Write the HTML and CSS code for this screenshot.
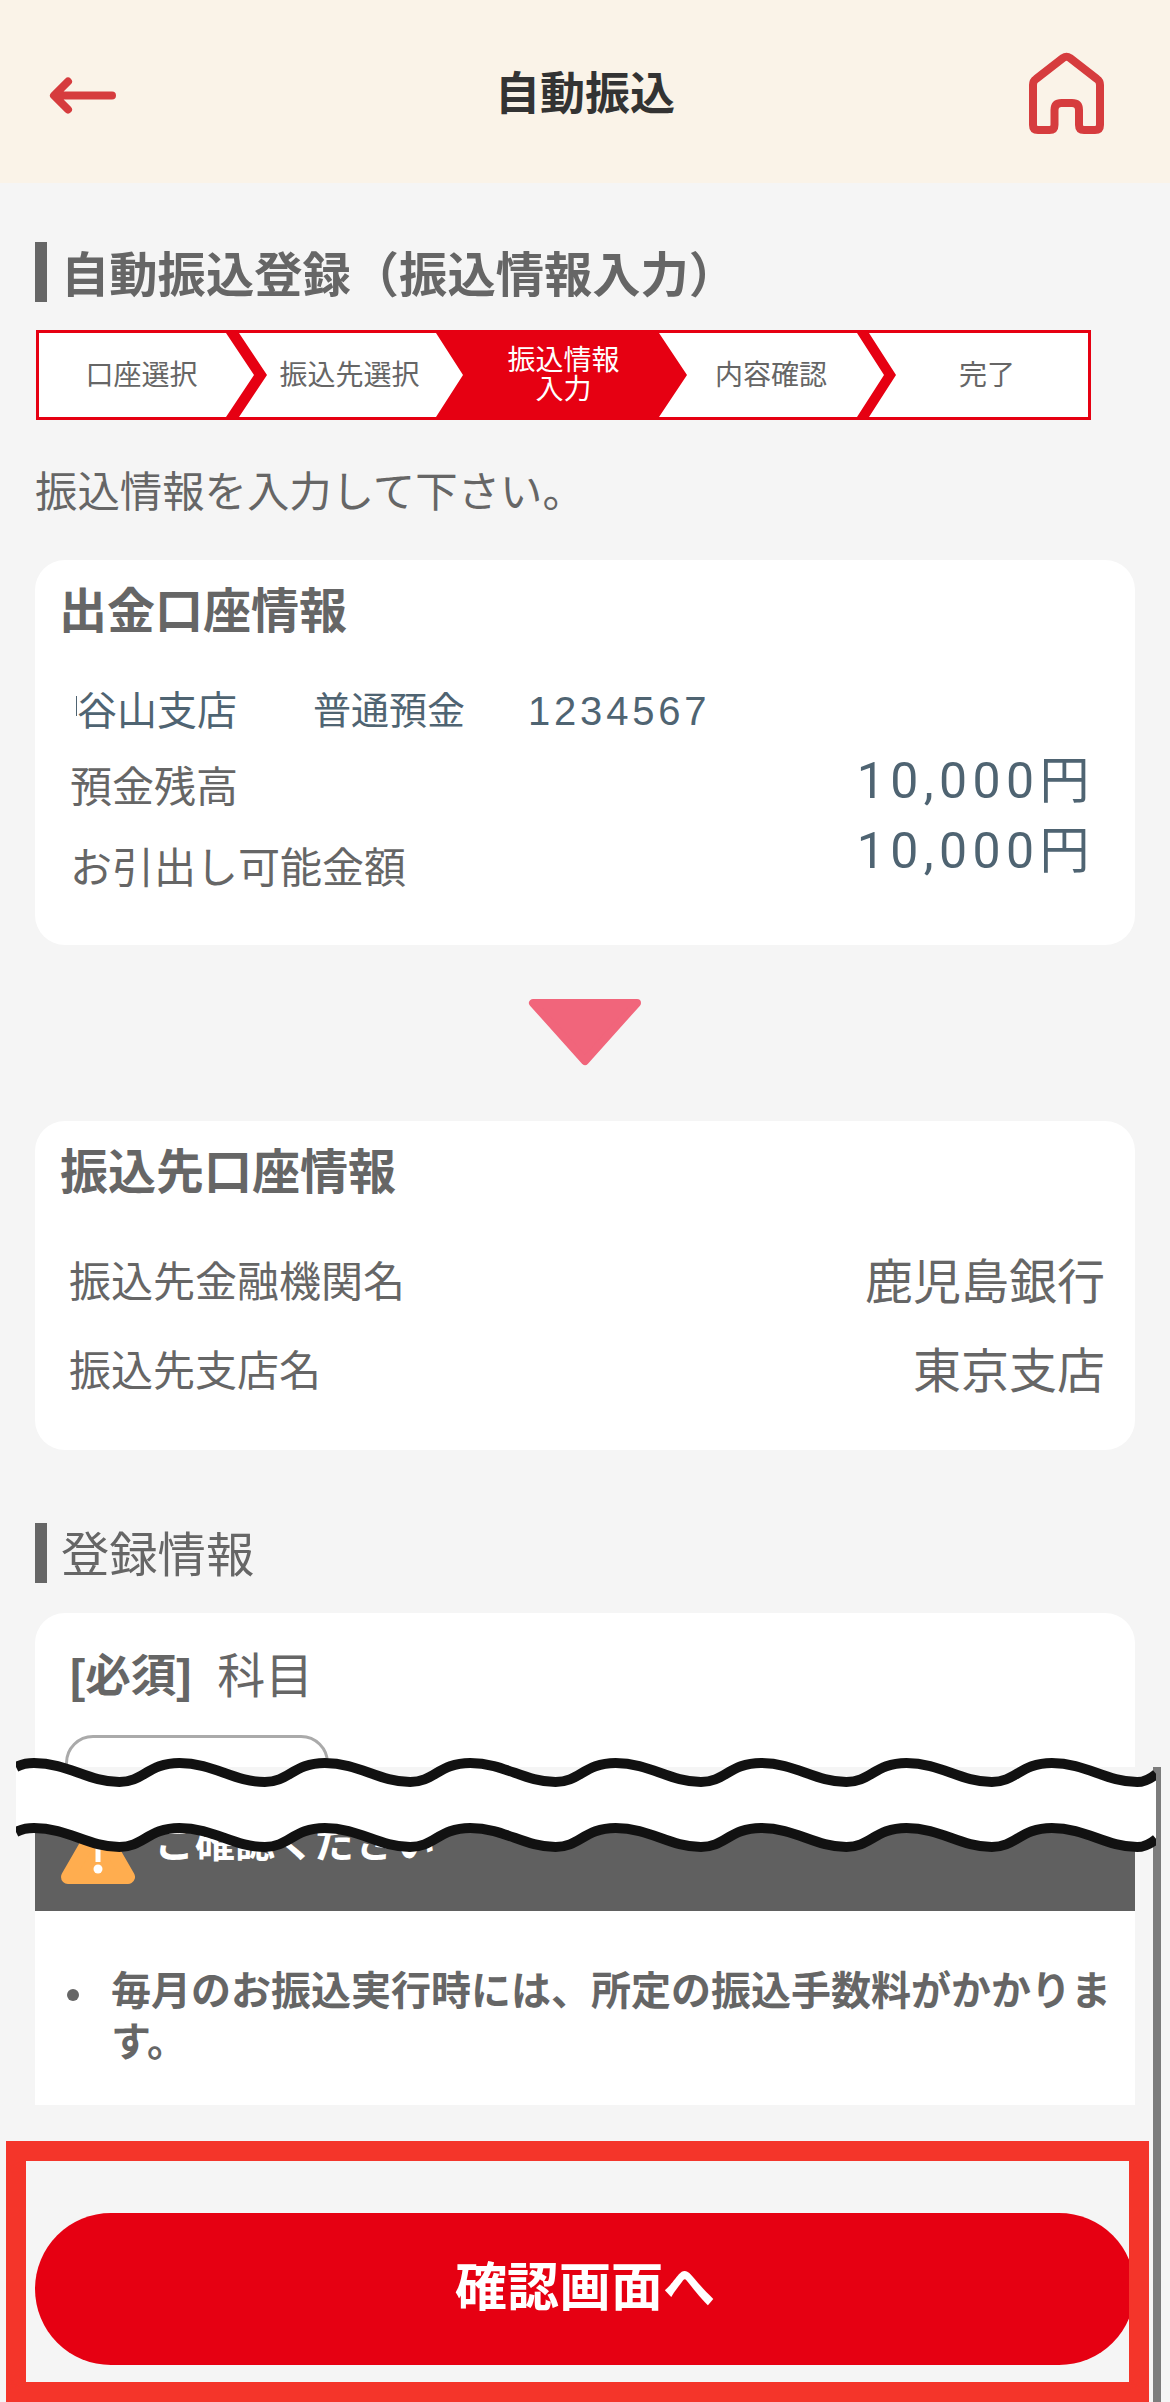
FILE: index.html
```html
<!DOCTYPE html>
<html lang="ja">
<head>
    <meta charset="UTF-8">
    <meta name="viewport" content="width=device-width, initial-scale=1.0">
    <title>自動振込</title>
    <link rel="stylesheet" href="styles.css">
</head>
<body>
    <div class="upper">
        <header class="topbar">
            <svg class="back-icon" viewBox="0 0 70 40" aria-hidden="true">
                <path d="M66 20.5H10M22 6.5L8 20.5l14 14" fill="none" stroke="#d63c3e" stroke-width="8" stroke-linecap="round" stroke-linejoin="round"/>
            </svg>
            <h1>自動振込</h1>
            <svg class="home-icon" viewBox="0 0 80 86" aria-hidden="true">
                <path d="M27.5 75V60q0-7 7-7h10.5q7 0 7 7V75q0 5 5 5H68q5 0 5-5V35q0-4-3-6L43 8q-3.5-2.5-7 0L9 29q-3 2-3 6V75q0 5 5 5H22.5q5 0 5-5z" fill="none" stroke="#d63c3e" stroke-width="8" stroke-linejoin="round"/>
            </svg>
        </header>

        <main class="content">
            <h2 class="section-title">自動振込登録（振込情報入力）</h2>

            <div class="steps">
                <svg class="steps-bg" viewBox="0 0 1049 84" aria-hidden="true">
                    <polygon points="187,0 200,0 228,42 200,84 187,84 215,42" fill="#e60012"/>
                    <polygon points="397,0 620,0 648,42 620,84 397,84 424,42" fill="#e60012"/>
                    <polygon points="818,0 830,0 857,42 830,84 818,84 845,42" fill="#e60012"/>
                </svg>
                <div class="step step-1">口座選択</div>
                <div class="step step-2">振込先選択</div>
                <div class="step step-3 active">振込情報<br>入力</div>
                <div class="step step-4">内容確認</div>
                <div class="step step-5">完了</div>
            </div>

            <p class="intro">振込情報を入力して下さい。</p>

            <section class="card from-card">
                <h3 class="card-title">出金口座情報</h3>
                <div class="account-line">
                    <span class="branch">谷山支店</span>
                    <span class="kind">普通預金</span>
                    <span class="number">1234567</span>
                </div>
                <div class="balance">
                    <div class="balance-labels">
                        <div>預金残高</div>
                        <div>お引出し可能金額</div>
                    </div>
                    <div class="balance-amounts">
                        <div>10,000円</div>
                        <div>10,000円</div>
                    </div>
                </div>
            </section>

            <svg class="down-arrow" viewBox="0 0 114 68" aria-hidden="true">
                <polygon points="5,5 109,5 57,63" fill="#f1657b" stroke="#f1657b" stroke-width="8" stroke-linejoin="round"/>
            </svg>

            <section class="card to-card">
                <h3 class="card-title">振込先口座情報</h3>
                <div class="to-row">
                    <span class="to-label">振込先金融機関名</span>
                    <span class="to-value">鹿児島銀行</span>
                </div>
                <div class="to-row">
                    <span class="to-label">振込先支店名</span>
                    <span class="to-value">東京支店</span>
                </div>
            </section>

            <h2 class="section-title plain">登録情報</h2>

            <section class="card form-card">
                <div class="field-label"><b>[必須]</b><span class="field-name">科目</span></div>
                <div class="select-box"></div>
            </section>
        </main>
    </div>

    <div class="lower">
        <div class="notice">
            <div class="notice-head">
                <svg class="warn-icon" viewBox="0 0 74 66" aria-hidden="true">
                    <polygon points="37,7 67,59 7,59" fill="#ffad4f" stroke="#ffad4f" stroke-width="14" stroke-linejoin="round"/>
                    <rect x="34.5" y="22" width="5" height="22" fill="#fff"/>
                    <circle cx="37" cy="51" r="4.5" fill="#fff"/>
                </svg>
                <span class="notice-title">ご確認ください</span>
            </div>
            <ul class="notice-list">
                <li>毎月のお振込実行時には、所定の振込手数料がかかります。</li>
            </ul>
        </div>

        <footer class="actions">
            <button class="next-btn" type="button">確認画面へ</button>
            <div class="highlight"></div>
        </footer>
    </div>

    <div class="scrollbar"></div>

    <!-- torn edge between the two halves of the long screenshot -->
    <svg class="tear" viewBox="0 0 1140 110" aria-hidden="true">
        <path fill="#fff" d="M0 17C6 14 12 13 18 13c34 0 54 19 85.4 19c24 0 29 -19 60 -19c34 0 54 19 85.4 19c24 0 29 -19 60 -19c34 0 54 19 85.4 19c24 0 29 -19 60 -19c34 0 54 19 85.4 19c24 0 29 -19 60 -19c34 0 54 19 85.4 19c24 0 29 -19 60 -19c34 0 54 19 85.4 19c24 0 29 -19 60 -19c34 0 54 19 85.4 19c24 0 29 -19 60 -19c34 0 54 19 85.4 19c7 0 13 -3 19 -8L1140.2 89c-6 5 -12 8 -19 8c-31.4 0 -51.4 -19 -85.4 -19c-31 0 -36 19 -60 19c-31.4 0 -51.4 -19 -85.4 -19c-31 0 -36 19 -60 19c-31.4 0 -51.4 -19 -85.4 -19c-31 0 -36 19 -60 19c-31.4 0 -51.4 -19 -85.4 -19c-31 0 -36 19 -60 19c-31.4 0 -51.4 -19 -85.4 -19c-31 0 -36 19 -60 19c-31.4 0 -51.4 -19 -85.4 -19c-31 0 -36 19 -60 19c-31.4 0 -51.4 -19 -85.4 -19c-31 0 -36 19 -60 19c-31.4 0 -51.4 -19 -85.4 -19C12 78 6 79 0 82Z"/>
        <path fill="none" stroke="#111" stroke-width="10" d="M0 17C6 14 12 13 18 13c34 0 54 19 85.4 19c24 0 29 -19 60 -19c34 0 54 19 85.4 19c24 0 29 -19 60 -19c34 0 54 19 85.4 19c24 0 29 -19 60 -19c34 0 54 19 85.4 19c24 0 29 -19 60 -19c34 0 54 19 85.4 19c24 0 29 -19 60 -19c34 0 54 19 85.4 19c24 0 29 -19 60 -19c34 0 54 19 85.4 19c24 0 29 -19 60 -19c34 0 54 19 85.4 19c7 0 13 -3 19 -8"/>
        <path fill="none" stroke="#111" stroke-width="10" d="M0 82C6 79 12 78 18 78c34 0 54 19 85.4 19c24 0 29 -19 60 -19c34 0 54 19 85.4 19c24 0 29 -19 60 -19c34 0 54 19 85.4 19c24 0 29 -19 60 -19c34 0 54 19 85.4 19c24 0 29 -19 60 -19c34 0 54 19 85.4 19c24 0 29 -19 60 -19c34 0 54 19 85.4 19c24 0 29 -19 60 -19c34 0 54 19 85.4 19c24 0 29 -19 60 -19c34 0 54 19 85.4 19c7 0 13 -3 19 -8"/>
    </svg>
</body>
</html>
```

FILE: styles.css
```css
html, body {
    margin: 0;
    padding: 0;
}

body {
    position: relative;
    width: 1170px;
    height: 2402px;
    overflow: hidden;
    background-color: #f5f5f5;
    color: #666;
    font-family: "Liberation Sans", "Noto Sans CJK JP", sans-serif;
}

.upper {
    height: 1767px;
    overflow: hidden;
}

/* top bar */
.topbar {
    display: grid;
    grid-template-columns: 1fr auto 1fr;
    align-items: center;
    height: 183px;
    padding: 0 46px;
    box-sizing: border-box;
    background-color: #faf3e8;
}

.topbar h1 {
    margin: 6px 0 0;
    font-size: 45px;
    line-height: 60px;
    font-weight: bold;
    color: #333;
}

.back-icon {
    width: 70px;
    height: 40px;
    margin-top: 6px;
}

.home-icon {
    justify-self: end;
    width: 80px;
    height: 86px;
    margin: 3px 17px 0 0;
}

.content {
    padding: 0 35px;
}

.section-title {
    margin: 59px 0 0;
    height: 60px;
    padding-left: 14px;
    border-left: 12px solid #666;
    font-size: 48.3px;
    line-height: 66px;
    font-weight: bold;
    color: #666;
}

.section-title.plain {
    margin-top: 73px;
    padding-left: 14px;
    line-height: 64px;
    font-weight: normal;
}

/* step indicator */
.steps {
    position: relative;
    display: flex;
    width: 1055px;
    height: 90px;
    margin: 28px 0 0 1px;
    box-sizing: border-box;
    border: 3px solid #e60012;
    background-color: #fff;
}

.steps-bg {
    position: absolute;
    top: 0;
    left: 0;
    width: 1049px;
    height: 84px;
}

.step {
    position: relative;
    display: flex;
    align-items: center;
    justify-content: center;
    box-sizing: border-box;
    font-size: 28px;
    line-height: 29px;
    text-align: center;
    color: #666;
}

.step-1 { width: 205px; }
.step-2 { width: 211px; }
.step-3 { width: 217px; }
.step-4 { width: 198px; }
.step-5 { width: 218px; padding-left: 16px; }

.step.active {
    color: #fff;
}

.intro {
    margin: 43px 0 0;
    font-size: 42.4px;
    line-height: 60px;
}

/* cards */
.card {
    background-color: #fff;
    border-radius: 30px;
}

.card-title {
    margin: 0;
    font-size: 48px;
    line-height: 60px;
    font-weight: bold;
    color: #666;
}

.from-card {
    margin-top: 37px;
    padding: 22px 40px 36px 24px;
}

.account-line {
    display: flex;
    margin-top: 44px;
    padding-left: 17px;
    font-size: 40px;
    line-height: 50px;
    color: #4f6472;
}

.branch {
    position: relative;
    padding-left: 1px;
}

/* edge of the masked branch name */
.branch::before {
    content: "";
    position: absolute;
    top: 10px;
    left: 0;
    width: 1px;
    height: 20px;
    background-color: #4f6472;
}

.kind {
    margin-left: 76px;
    font-size: 38px;
}

.number {
    margin-left: 63px;
    letter-spacing: 3.8px;
}

.balance {
    display: flex;
    justify-content: space-between;
    margin-top: 9px;
    padding-left: 11px;
}

.balance-labels {
    padding-top: 2px;
    font-size: 42px;
    line-height: 81px;
}

.balance-amounts {
    margin-top: 1px;
    font-family: Roboto, "Noto Sans CJK JP", sans-serif;
    font-weight: 400;
    font-size: 50px;
    line-height: 70px;
    letter-spacing: 5.4px;
    text-align: right;
    color: #4f6472;
}

.down-arrow {
    display: block;
    width: 114px;
    height: 68px;
    margin: 53px auto 0;
}

.to-card {
    margin-top: 55px;
    padding: 22px 30px 48px 25px;
}

.to-row {
    display: flex;
    justify-content: space-between;
    line-height: 60px;
    margin-top: 29px;
    padding-left: 9px;
}

.card-title + .to-row {
    margin-top: 50px;
}

.to-label {
    font-size: 42px;
}

.to-value {
    font-size: 48px;
}

.form-card {
    margin-top: 30px;
    padding: 34px 0 0 30px;
    height: 300px;
}

.field-label {
    display: flex;
    align-items: center;
    padding-left: 5px;
    line-height: 60px;
}

.field-label b {
    font-size: 45.5px;
}

.field-name {
    margin-left: 26px;
    font-size: 48px;
}

.select-box {
    width: 264px;
    height: 100px;
    margin-top: 28px;
    box-sizing: border-box;
    border: 3px solid #aaa;
    border-radius: 28px;
}

/* lower half of the page */
.lower {
    padding-top: 23px;
}

.notice {
    margin: 0 35px;
    background-color: #fff;
}

.notice-head {
    display: flex;
    align-items: center;
    height: 121px;
    padding-left: 26px;
    background-color: #606060;
}

.warn-icon {
    width: 74px;
    height: 66px;
}

.notice-title {
    margin-left: 20px;
    padding-bottom: 16px;
    font-size: 40px;
    line-height: 50px;
    font-weight: bold;
    color: #fff;
}

.notice-list {
    margin: 0;
    padding: 55px 20px 37px 76px;
    list-style: none;
    font-size: 40px;
    line-height: 51px;
    font-weight: bold;
    color: #666;
}

.notice-list li {
    position: relative;
}

.notice-list li::before {
    content: "";
    position: absolute;
    top: 23px;
    left: -44px;
    width: 12px;
    height: 12px;
    border-radius: 50%;
    background-color: #666;
}

.actions {
    position: relative;
    height: 297px;
    padding: 108px 35px 0;
    box-sizing: border-box;
}

.next-btn {
    display: block;
    width: 100%;
    height: 152px;
    padding: 0 0 12px;
    border: 0;
    border-radius: 76px;
    background-color: #e60012;
    color: #fff;
    font-family: inherit;
    font-size: 52px;
    font-weight: bold;
}

/* red annotation frame round the button */
.highlight {
    position: absolute;
    top: 36px;
    left: 6px;
    width: 1143px;
    height: 261px;
    box-sizing: border-box;
    border: 20px solid #f4352a;
}

.scrollbar {
    position: absolute;
    top: 1767px;
    left: 1153px;
    width: 8px;
    height: 635px;
    background-color: #7c7c7c;
}

.tear {
    position: absolute;
    top: 1750px;
    left: 16px;
    width: 1140px;
    height: 110px;
}
```
